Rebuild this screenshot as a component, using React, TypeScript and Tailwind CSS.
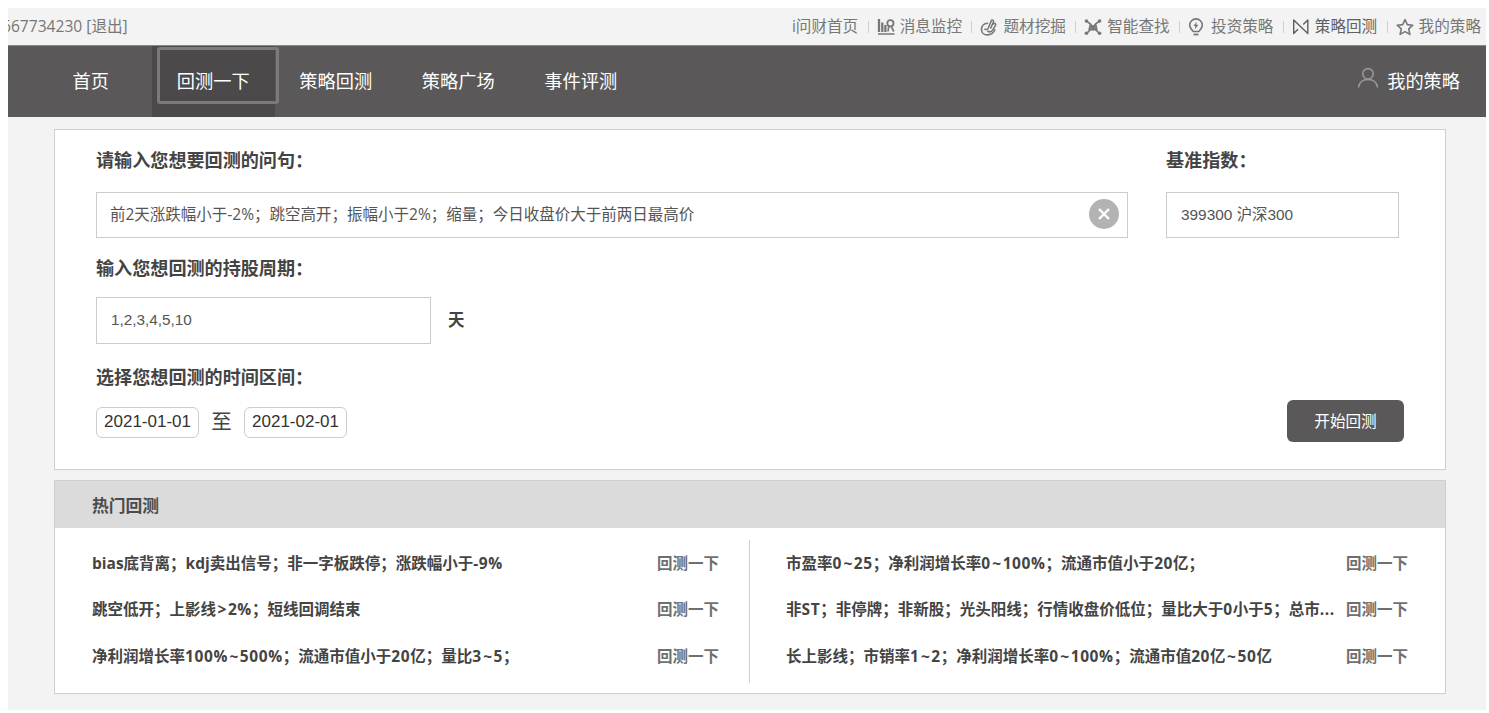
import type { ReactNode } from 'react'
import clsx from 'clsx'

interface TopLink {
  label: string
  icon: ReactNode
  active?: boolean
}

const topLinks: TopLink[] = [
  {
    label: '消息监控',
    icon: (
      <svg viewBox="0 0 18 18" className="h-[18px] w-[18px]" fill="none" stroke="currentColor">
        <path d="M2 1v13M5.3 4.5v9.5M8.4 7v7" strokeWidth="2.3" />
        <path d="M1 16h16.5" strokeWidth="1.5" />
        <circle cx="13.4" cy="5.2" r="3.1" strokeWidth="1.8" />
        <path d="M11.8 8l-.8 5.5M14.2 8.3l2.6 5.2" strokeWidth="1.7" />
      </svg>
    ),
  },
  {
    label: '题材挖掘',
    icon: (
      <svg
        viewBox="0 0 18 18"
        className="h-[18px] w-[18px]"
        fill="none"
        stroke="currentColor"
        strokeWidth="1.6"
        strokeLinecap="round"
        strokeLinejoin="round"
      >
        <path d="M7.5 5.3C4 5.500 1.500 8 1.500 11.400c0 3.300 2.500 5.500 5.800 5.500 3.600 0 6.900-2.200 7.500-5.200" />
        <path d="M5 11.200c1.500.8 2.600.2 3.300-1.200l3-7.200c.6-1.400 2.700-.6 2.200.9L10.800 10" />
        <path d="M13.400 5.800c1.300-1 2.800.1 2.100 1.500l-2.700 4.500c-1.200 2-3.200 2.400-5 1.500" />
      </svg>
    ),
  },
  {
    label: '智能查找',
    icon: (
      <svg viewBox="0 0 18 18" className="h-[18px] w-[18px]" fill="none" stroke="currentColor" strokeWidth="1.7">
        <path d="M2.5 3l4 3L9 9.500 11.500 6l4-3M2.500 15.500L9 9.500l6.500 6M6.500 6L5 12.500M11.500 6L13 12.500" />
        <g fill="currentColor" stroke="none">
          <circle cx="2.4" cy="3" r="1.8" />
          <circle cx="15.6" cy="3" r="1.8" />
          <circle cx="2.4" cy="15.3" r="1.8" />
          <circle cx="15.6" cy="15.3" r="1.8" />
          <circle cx="9" cy="10" r="2.7" />
        </g>
      </svg>
    ),
  },
  {
    label: '投资策略',
    icon: (
      <svg viewBox="0 0 18 18" className="-ml-px h-[18px] w-[18px]" fill="none" stroke="currentColor" strokeWidth="1.6">
        <path
          d="M6 13.5c-.2-1.400-3.300-2.700-3.300-6.300a6.300 6.300 0 0 1 12.600 0c0 3.600-3.100 4.900-3.300 6.300z"
          strokeLinejoin="round"
        />
        <path d="M6.5 16.500h5" strokeWidth="1.8" />
        <path d="M9.800 3.800L6.400 8h1.900l-.5 3.500 3.700-4.700H9.300z" fill="currentColor" stroke="none" />
      </svg>
    ),
  },
  {
    label: '策略回测',
    active: true,
    icon: (
      <svg viewBox="0 0 18 18" className="h-[18px] w-[18px]" fill="none" stroke="currentColor" strokeWidth="1.4">
        <path
          d="M6 11.200l-4.300 4.300V2l14.100 13.500V2l-4.600 4.500"
          strokeLinejoin="round"
        />
      </svg>
    ),
  },
  {
    label: '我的策略',
    icon: (
      <svg viewBox="0 0 18 18" className="h-[18px] w-[18px]" fill="none" stroke="currentColor" strokeWidth="1.6">
        <path
          d="M9 1.500l2.300 5.100 5.500.6-4.100 3.700 1.200 5.500L9 13.600l-4.900 2.800 1.200-5.500L1.200 7.200l5.500-.6z"
          strokeLinejoin="round"
        />
      </svg>
    ),
  },
]

const navItems = ['首页', '回测一下', '策略回测', '策略广场', '事件评测']

const leftQueries = [
  'bias底背离；kdj卖出信号；非一字板跌停；涨跌幅小于-9%',
  '跳空低开；上影线>2%；短线回调结束',
  '净利润增长率100%~500%；流通市值小于20亿；量比3~5；',
]

const rightQueries = [
  '市盈率0~25；净利润增长率0~100%；流通市值小于20亿；',
  '非ST；非停牌；非新股；光头阳线；行情收盘价低位；量比大于0小于5；总市...',
  '长上影线；市销率1~2；净利润增长率0~100%；流通市值20亿~50亿',
]

function TopBar() {
  return (
    <div className="flex h-[37px] items-center justify-between overflow-hidden pt-px text-[15.6px] whitespace-nowrap text-[#777]">
      <div className="-ml-[6px]">667734230 [退出]</div>
      <div className="flex items-center">
        <a className="pr-[9.5px]">i问财首页</a>
        {topLinks.map((link) => (
          <a
            key={link.label}
            className={clsx('flex items-center pr-[9.4px] last:pr-[5px]', link.active && 'text-[#5f5f5f]')}
          >
            <span className="h-3 w-px bg-[#d0d0d0]" />
            <span className="flex w-[31px] items-center pl-2">{link.icon}</span>
            {link.label}
          </a>
        ))}
      </div>
    </div>
  )
}

function NavBar() {
  return (
    <div className="flex h-[72px] items-stretch justify-between border-t border-[#8a8a8a] bg-[#5a5858] pl-[21.5px] text-[18.2px] text-white">
      <div className="flex">
        {navItems.map((item) => {
          const active = item === '回测一下'
          return (
            <a
              key={item}
              className={clsx('relative flex w-[122.5px] items-center justify-center pt-px', active && 'bg-[#4b4949]')}
            >
              {item}
              {active && (
                <span className="absolute top-px left-[5px] h-[57px] w-[122px] rounded-[3px] border-[3.5px] border-[#7c7b7b]" />
              )}
            </a>
          )
        })}
      </div>
      <a className="flex items-center gap-2 pt-px pr-[26px]">
        <svg viewBox="0 0 22 22" className="-mt-2 h-[22px] w-[22px]" fill="none" stroke="#989696" strokeWidth="1.6">
          <circle cx="11" cy="6.8" r="5.2" />
          <path d="M1.500 20.500c.6-5 4.200-8 9.500-8s8.900 3 9.500 8" />
        </svg>
        我的策略
      </a>
    </div>
  )
}

function Label({ children }: { children: ReactNode }) {
  return <div className="h-7 text-[18.1px] leading-7 font-bold text-[#444]">{children}</div>
}

function BacktestForm() {
  return (
    <div className="h-[341px] border border-[#cfcfcf] bg-white pt-4 pl-[41px]">
      <div className="flex gap-[38px]">
        <div>
          <Label>请输入您想要回测的问句：</Label>
          <div className="mt-[18px] flex h-[46px] w-[1032px] items-center justify-between border border-[#ccc] pr-2 pl-[13px] text-[15.5px] text-[#555]">
            <span>前2天涨跌幅小于-2%；跳空高开；振幅小于2%；缩量；今日收盘价大于前两日最高价</span>
            <span className="mb-[3px] flex h-[30px] w-[30px] items-center justify-center rounded-full bg-[#b3b3b3]">
              <svg viewBox="0 0 12 12" className="h-3 w-3" stroke="white" strokeWidth="2.4">
                <path d="M1 1l10 10M11 1L1 11" />
              </svg>
            </span>
          </div>
        </div>
        <div>
          <Label>基准指数：</Label>
          <div className="mt-[18px] flex h-[46px] w-[233px] items-center border border-[#ccc] pl-[14px] font-['Liberation_Sans','Noto_Sans_CJK_SC',sans-serif] text-[15.4px] text-[#555]">
            399300 沪深300
          </div>
        </div>
      </div>

      <div className="mt-4">
        <Label>输入您想回测的持股周期：</Label>
      </div>
      <div className="mt-[15px] flex items-center gap-[17px]">
        <div className="flex h-[47px] w-[335px] items-center border border-[#ccc] pl-[14px] font-['Liberation_Sans',sans-serif] text-[15.3px] text-[#555]">
          1,2,3,4,5,10
        </div>
        <span className="text-[16.5px] font-bold text-[#444]">天</span>
      </div>

      <div className="mt-[19px]">
        <Label>选择您想回测的时间区间：</Label>
      </div>
      <div className="mt-[9px] flex items-center justify-between pr-[41px]">
        <div className="flex items-center pt-[2px] font-['Liberation_Sans','Noto_Sans_CJK_SC',sans-serif] text-[17px] text-[#333]">
          <span className="flex h-[31px] w-[103px] items-center justify-center rounded-md border border-[#ccc]">
            2021-01-01
          </span>
          <span className="w-[45px] text-center text-[20.5px] leading-7 text-[#444]">至</span>
          <span className="flex h-[31px] w-[103px] items-center justify-center rounded-md border border-[#ccc]">
            2021-02-01
          </span>
        </div>
        <button className="h-[42px] w-[117px] rounded-md bg-[#5a5858] pt-px text-[15.6px] text-white">开始回测</button>
      </div>
    </div>
  )
}

// Figures are set slightly looser than the surrounding text
function QueryText({ text }: { text: string }) {
  return (
    <span className="text-[#444]">
      {text.split(/([~>]|[0-9A-Z%.-]+)/).map((part, i) => {
        if (/^[~>]$/.test(part)) {
          return (
            <span key={i} className="px-[1.5px]">
              {part}
            </span>
          )
        }
        if (/^[0-9A-Z%.-]+$/.test(part)) {
          return (
            <span key={i} className="tracking-[0.6px]">
              {part}
            </span>
          )
        }
        return part
      })}
    </span>
  )
}

function QueryList({ queries }: { queries: string[] }) {
  return (
    <div className="flex flex-col">
      {queries.map((query) => (
        <div key={query} className="flex h-[46.5px] items-center justify-between font-bold whitespace-nowrap">
          <QueryText text={query} />
          <a className="text-[#6f6f6f]">回测一下</a>
        </div>
      ))}
    </div>
  )
}

function HotBacktests() {
  return (
    <div className="mt-[10px] h-[214px] border border-[#cfcfcf] bg-white">
      <div className="flex h-[47px] items-center bg-[#dbdbdb] pt-[2px] pl-[37px] text-[16.8px] font-bold text-[#4c4c4c]">
        热门回测
      </div>
      <div className="flex pt-3 pl-[37px] text-[15.5px]">
        <div className="w-[627px]">
          <QueryList queries={leftQueries} />
        </div>
        <div className="ml-[30px] h-[143px] w-px bg-[#d0d0d0]" />
        <div className="ml-9 w-[622px]">
          <QueryList queries={rightQueries} />
        </div>
      </div>
    </div>
  )
}

export default function App() {
  return (
    <div className="h-[713px] w-[1489px] bg-white pt-2 pr-[3px] pl-2 font-['Open_Sans','Noto_Sans_CJK_SC',sans-serif]">
      <div className="h-[702px] overflow-hidden bg-[#f3f3f3]">
        <TopBar />
        <NavBar />
        <div className="mt-3 ml-[46px] w-[1392px]">
          <BacktestForm />
          <HotBacktests />
        </div>
      </div>
    </div>
  )
}
